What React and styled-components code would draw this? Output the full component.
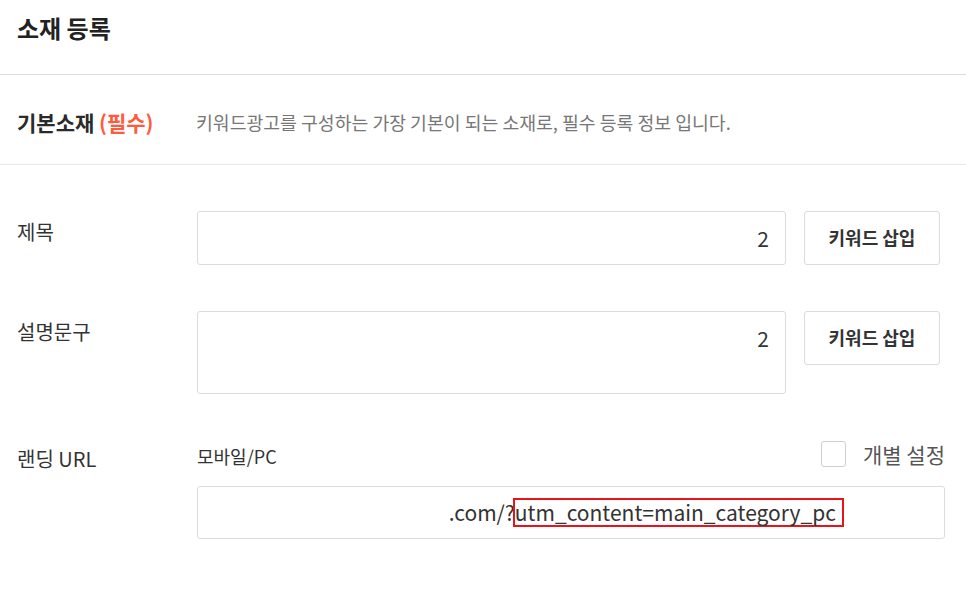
import React from 'react'
import styled, { createGlobalStyle } from 'styled-components'

const GlobalStyle = createGlobalStyle`
  body {
    margin: 0;
    background: #fff;
    font-family: "Noto Sans CJK KR", "Noto Sans", sans-serif;
    color: #333;
  }
`

const Page = styled.div`
  width: 966px;
`

const Header = styled.div`
  height: 75px;
  padding: 10px 17px 0;
  box-sizing: border-box;
  border-bottom: 1px solid #dedede;
`

const Title = styled.h1`
  margin: 0;
  font-size: 24px;
  line-height: 36px;
  font-weight: 700;
  color: #222;
`

const Section = styled.div`
  height: 90px;
  display: flex;
  align-items: center;
  padding: 4px 17px 0;
  box-sizing: border-box;
  border-bottom: 1px solid #e8e8e8;
`

const SectionTitle = styled.h2`
  margin: 0;
  width: 179px;
  font-size: 21px;
  font-weight: 700;
  color: #2a2a2a;
`

const Required = styled.span`
  color: #ff5b3f;
`

const SectionDesc = styled.p`
  margin: 0;
  font-size: 18.3px;
  color: #777;
`

const Body = styled.div`
  padding: 46px 21px 0 17px;
  display: flex;
  flex-direction: column;
  gap: 46px;
`

const Row = styled.div`
  display: grid;
  grid-template-columns: 180px 1fr;
`

const Label = styled.div`
  font-size: 20px;
  line-height: 29px;
  color: #333;
  padding-top: ${p => p.$top || 6}px;
`

const Controls = styled.div`
  display: flex;
  gap: 18px;
  align-items: flex-start;
  padding-right: 5px;
`

const Field = styled.div`
  flex: ${p => (p.$grow ? 1 : 'none')};
  height: ${p => p.$height}px;
  box-sizing: border-box;
  border: 1px solid #dcdcdc;
  border-radius: 3px;
  padding: ${p => p.$padTop || 0}px ${p => p.$padRight || 16}px 0 16px;
  display: flex;
  justify-content: flex-end;
  align-items: ${p => (p.$padTop ? 'flex-start' : 'center')};
  font-size: 21px;
  line-height: 29px;
  color: #333;
  white-space: nowrap;
`

const Button = styled.button`
  width: 136px;
  height: 54px;
  background: #fff;
  border: 1px solid #dcdcdc;
  border-radius: 3px;
  font-family: inherit;
  font-size: 18px;
  font-weight: 700;
  color: #333;
  padding: 0 0 3px;
`

const UrlBlock = styled.div`
  display: flex;
  flex-direction: column;
  gap: 19px;
`

const UrlHead = styled.div`
  display: flex;
  justify-content: space-between;
  align-items: center;
  height: 27px;
`

const SubLabel = styled.span`
  font-size: 18px;
  color: #333;
  padding-top: 5px;
`

const CheckLabel = styled.label`
  display: flex;
  align-items: center;
  gap: 17px;
  font-size: 21px;
  color: #555;
`

const Checkbox = styled.span`
  width: 25px;
  height: 26px;
  box-sizing: border-box;
  border: 1px solid #cfcfcf;
  border-radius: 3px;
  background: #fff;
`

const Highlight = styled.span`
  border: 2px solid #e8141c;
  padding: 0 6px 0 0;
  line-height: 25px;
  margin-left: -2px;
`

export default function App() {
  return (
    <Page>
      <GlobalStyle />
      <Header>
        <Title>소재 등록</Title>
      </Header>
      <Section>
        <SectionTitle>
          기본소재 <Required>(필수)</Required>
        </SectionTitle>
        <SectionDesc>
          키워드광고를 구성하는 가장 기본이 되는 소재로, 필수 등록 정보 입니다.
        </SectionDesc>
      </Section>
      <Body>
        <Row>
          <Label>제목</Label>
          <Controls>
            <Field $grow $height={54}>2</Field>
            <Button>키워드 삽입</Button>
          </Controls>
        </Row>
        <Row>
          <Label>설명문구</Label>
          <Controls>
            <Field $grow $height={83} $padTop={12}>
              2
            </Field>
            <Button>키워드 삽입</Button>
          </Controls>
        </Row>
        <Row>
          <Label $top={4}>랜딩 URL</Label>
          <UrlBlock>
            <UrlHead>
              <SubLabel>모바일/PC</SubLabel>
              <CheckLabel>
                <Checkbox />
                개별 설정
              </CheckLabel>
            </UrlHead>
            <Field $height={53} $padRight={100}>
              .com/?<Highlight>utm_content=main_category_pc</Highlight>
            </Field>
          </UrlBlock>
        </Row>
      </Body>
    </Page>
  )
}
